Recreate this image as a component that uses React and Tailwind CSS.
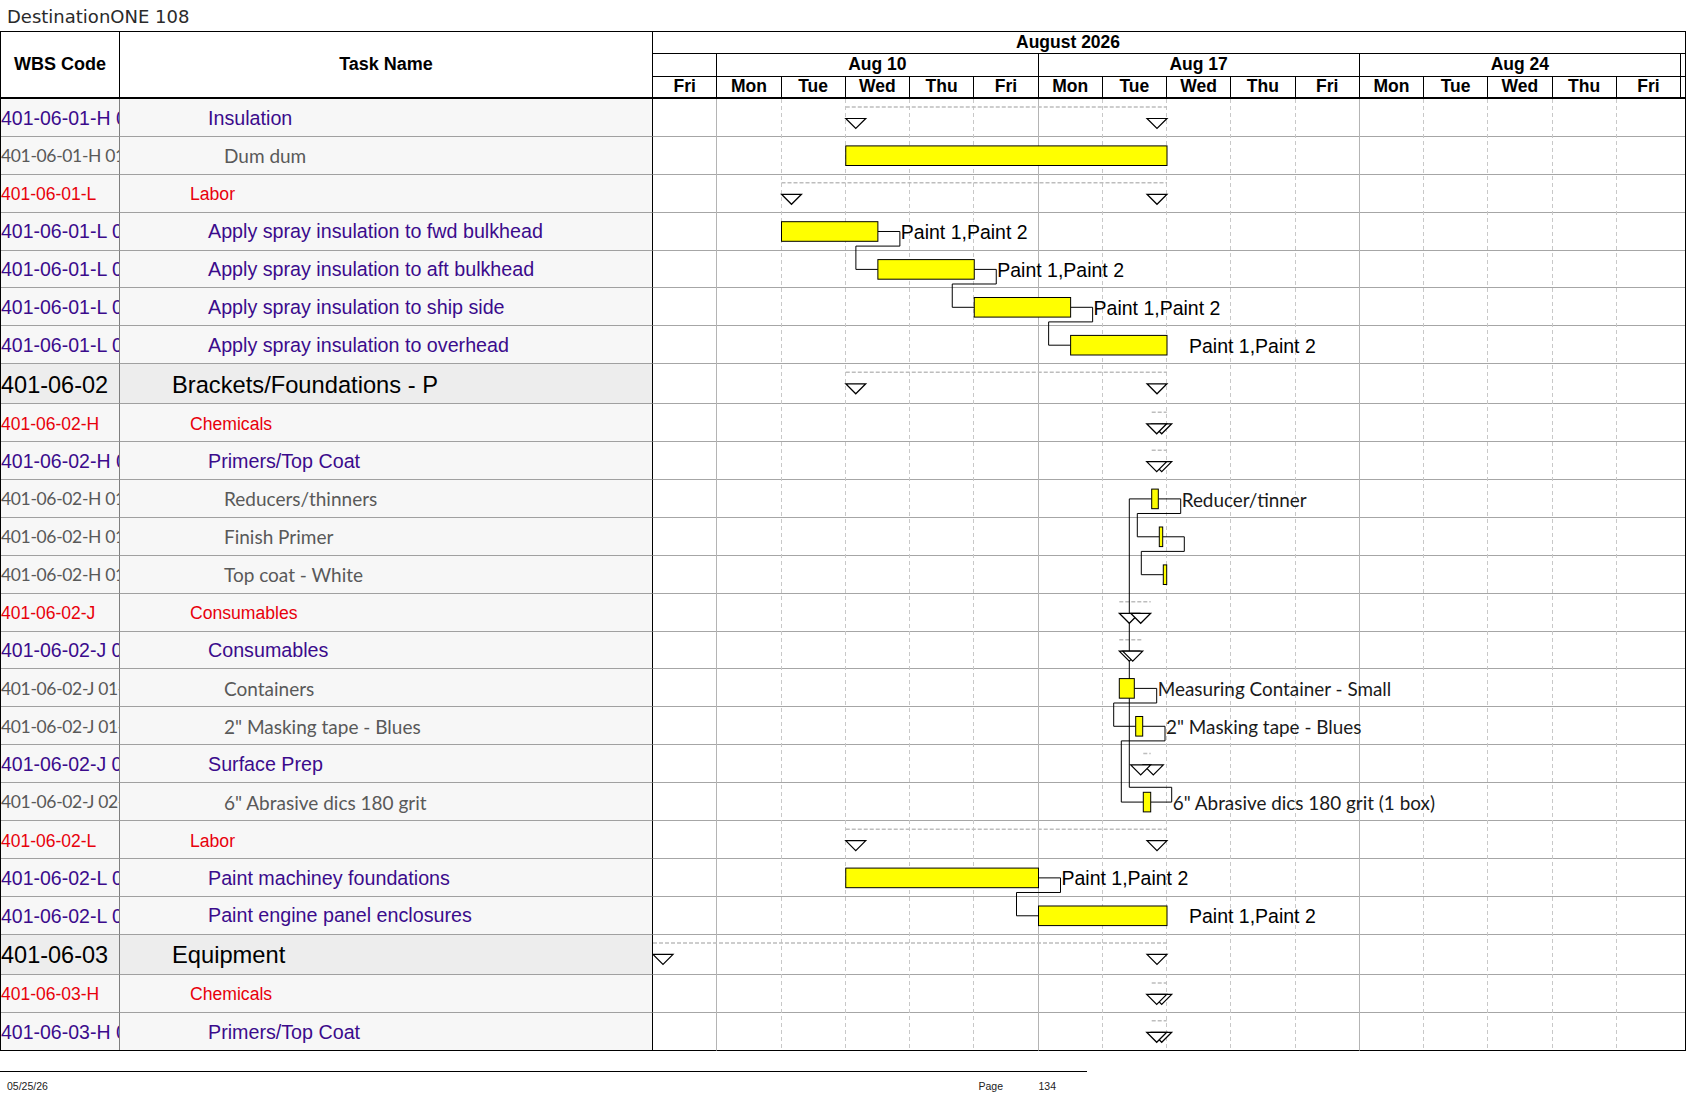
import React from "react";

// chart geometry (page pixels)
const DW = 64.25;
const X0 = 653;
const TOP = 99;
const cx = (d) => X0 + d * DW;

const DAYS = ["Fri", "Mon", "Tue", "Wed", "Thu", "Fri", "Mon", "Tue", "Wed", "Thu", "Fri", "Mon", "Tue", "Wed", "Thu", "Fri"];

// [type, wbs, task name]  p = purple, g = grey leaf, r = red, s = summary
const ROWS = [
  ["p", "401-06-01-H 01", "Insulation"],
  ["g", "401-06-01-H 01-01", "Dum dum"],
  ["r", "401-06-01-L", "Labor"],
  ["p", "401-06-01-L 01", "Apply spray insulation to fwd bulkhead"],
  ["p", "401-06-01-L 02", "Apply spray insulation to aft bulkhead"],
  ["p", "401-06-01-L 03", "Apply spray insulation to ship side"],
  ["p", "401-06-01-L 04", "Apply spray insulation to overhead"],
  ["s", "401-06-02", "Brackets/Foundations - P"],
  ["r", "401-06-02-H", "Chemicals"],
  ["p", "401-06-02-H 01", "Primers/Top Coat"],
  ["g", "401-06-02-H 01-01", "Reducers/thinners"],
  ["g", "401-06-02-H 01-02", "Finish Primer"],
  ["g", "401-06-02-H 01-03", "Top coat - White"],
  ["r", "401-06-02-J", "Consumables"],
  ["p", "401-06-02-J 01", "Consumables"],
  ["g", "401-06-02-J 01-01", "Containers"],
  ["g", "401-06-02-J 01-02", '2" Masking tape - Blues'],
  ["p", "401-06-02-J 02", "Surface Prep"],
  ["g", "401-06-02-J 02-01", '6" Abrasive dics 180 grit'],
  ["r", "401-06-02-L", "Labor"],
  ["p", "401-06-02-L 01", "Paint machiney foundations"],
  ["p", "401-06-02-L 02", "Paint engine panel enclosures"],
  ["s", "401-06-03", "Equipment"],
  ["r", "401-06-03-H", "Chemicals"],
  ["p", "401-06-03-H 01", "Primers/Top Coat"],
];

const STY = {
  p: {
    bg: "bg-[#f7f7f7]",
    pad: "pt-[2px]",
    wbs: "text-[19.5px] text-[#3b0b8c]",
    name: "pl-[88px] text-[19.7px] text-[#3b0b8c]",
  },
  g: {
    bg: "bg-[#f7f7f7]",
    pad: "pt-[1px]",
    wbs: "font-['Lato',sans-serif] text-[17.5px] tracking-[-0.35px] text-[#595959]",
    name: "pl-[104px] font-['Lato',sans-serif] text-[19px] text-[#595959]",
  },
  r: {
    bg: "bg-[#f7f7f7]",
    pad: "pt-[4px]",
    wbs: "text-[17.5px] text-[#e8000b]",
    name: "pl-[70px] text-[17.6px] text-[#e8000b]",
  },
  s: {
    bg: "bg-[#ededed]",
    pad: "pt-[4px]",
    wbs: "text-[23.5px] text-black",
    name: "pl-[52px] text-[23.7px] text-black",
  },
};

const rowH = (t) => (t === "s" ? 40 : 37.9);

const layout = () => {
  let y = TOP;
  return ROWS.map((r) => {
    const top = y;
    const h = rowH(r[0]);
    y += h;
    return { top, h, mid: top + 18.8 };
  });
};

// summary rows: [row, start, end]
const SUMMARY = [
  [0, cx(3), cx(8)],
  [2, cx(2), cx(8)],
  [7, cx(3), cx(8)],
  [8, 1151.7, 1166.7],
  [9, 1151.7, 1166.7],
  [13, 1119.3, 1150.7],
  [14, 1119.3, 1142.7],
  [17, 1143.3, 1150.7],
  [19, cx(3), cx(8)],
  [22, cx(0), cx(8)],
  [23, 1151.7, 1166.7],
  [24, 1151.7, 1166.7],
];

// task bars: [row, start, end]
const BARS = [
  [1, cx(3), cx(8)],
  [3, cx(2), cx(3.5)],
  [4, cx(3.5), cx(5)],
  [5, cx(5), cx(6.5)],
  [6, cx(6.5), cx(8)],
  [10, 1151.7, 1158.3],
  [11, 1159.3, 1162.7],
  [12, 1163.3, 1166.7],
  [15, 1119.3, 1134.3],
  [16, 1135.7, 1142.7],
  [18, 1143.3, 1150.7],
  [20, cx(3), cx(6)],
  [21, cx(6), cx(8)],
];

// bar labels: [row, text, x, lineFrom (null = no leader), calibri?]
const LABELS = [
  [3, "Paint 1,Paint 2", cx(3.5) + 22, cx(3.5), false],
  [4, "Paint 1,Paint 2", cx(5) + 22, cx(5), false],
  [5, "Paint 1,Paint 2", cx(6.5) + 22, cx(6.5), false],
  [6, "Paint 1,Paint 2", cx(8) + 21, null, false],
  [10, "Reducer/tinner", 1180.7, 1158.3, true],
  [11, "", 1184.3, 1162.7, true],
  [15, "Measuring Container - Small", 1156.7, 1134.3, true],
  [16, '2" Masking tape - Blues', 1165, 1142.7, true],
  [18, '6" Abrasive dics 180 grit (1 box)', 1171.7, 1150.7, true],
  [20, "Paint 1,Paint 2", cx(6) + 22, cx(6), false],
  [21, "Paint 1,Paint 2", cx(8) + 21, null, false],
];

// finish-to-start links: [fromRow, fromX, toRow, toX]
const LINKS = [
  [3, cx(3.5) + 22, 4, cx(3.5)],
  [4, cx(5) + 22, 5, cx(5)],
  [5, cx(6.5) + 22, 6, cx(6.5)],
  [10, 1180.7, 11, 1159.3],
  [11, 1184.3, 12, 1163.3],
  [15, 1156.7, 16, 1135.7],
  [16, 1165, 18, 1143.3],
  [20, cx(6) + 22, 21, cx(6)],
];

const tri = (x, y) => `${x},${y} ${x + 20},${y} ${x + 10},${y + 10}`;

const ChartOverlay = ({ L, h }) => (
  <svg className="absolute top-0 left-[652px]" width={1032} height={h} viewBox={`653 ${TOP} 1032 ${h}`}>
    {/* day grid */}
    {Array.from({ length: 15 }, (_, i) => i + 1).map((k) => (
      <line
        key={k}
        x1={Math.round(cx(k)) - 0.5}
        x2={Math.round(cx(k)) - 0.5}
        y1={TOP}
        y2={TOP + h}
        stroke={k % 5 === 1 ? "#b4b4b4" : "#c8c8c8"}
        strokeDasharray={k % 5 === 1 ? undefined : "4 3"}
        strokeWidth="1"
      />
    ))}

    {/* summary dashed spans */}
    {SUMMARY.map(([r, s, e]) => (
      <line key={"d" + r} x1={s} x2={e} y1={L[r].top + 8} y2={L[r].top + 8} stroke="#bdbdbd" strokeWidth="1.5" strokeDasharray="4 2" />
    ))}

    {/* links */}
    {LINKS.map(([a, fx, b, tx]) => (
      <path
        key={"l" + a}
        d={`M${fx},${L[a].mid} V${L[a].top + L[a].h - 4.5} H${tx - 22} V${L[b].mid} H${tx}`}
        fill="none"
        stroke="#000"
        strokeWidth="1"
      />
    ))}
    <path d={`M1171.7,${L[18].mid} V${L[18].top + 4} H1129.3 V${L[10].mid} H1151.7`} fill="none" stroke="#000" strokeWidth="1" />

    {/* label leaders */}
    {LABELS.filter((l) => l[3] !== null).map(([r, , x, from]) => (
      <line key={"ll" + r} x1={from} x2={x} y1={L[r].mid} y2={L[r].mid} stroke="#000" strokeWidth="1" />
    ))}

    {/* bars */}
    {BARS.map(([r, s, e]) => (
      <rect key={"b" + r} x={s} y={L[r].top + 9} width={e - s} height={19.6} fill="#ffff00" stroke="#000" strokeWidth="1" />
    ))}

    {/* summary milestones */}
    {SUMMARY.map(([r, s, e]) => (
      <g key={"t" + r} fill="#fff" stroke="#000" strokeWidth="1.2">
        <polygon points={tri(s, L[r].top + 19.5)} />
        <polygon points={tri(e - 20, L[r].top + 19.5)} />
      </g>
    ))}

    {/* labels */}
    {LABELS.filter((l) => l[1]).map(([r, text, x, , cal]) => (
      <text
        key={"x" + r}
        x={x + 1}
        y={L[r].mid + 0.5}
        dominantBaseline="central"
        fill={cal ? "#1a1a1a" : "#000"}
        className={cal ? "font-['Lato',sans-serif] text-[18.9px]" : "font-['Liberation_Sans',Arial,sans-serif] text-[19.5px]"}
      >
        {text}
      </text>
    ))}
  </svg>
);

const Header = () => (
  <div className="flex h-[67px] border-b-2 border-black">
    <div className="w-[119px] border-r border-black flex items-center justify-center font-bold text-[18px]">WBS Code</div>
    <div className="w-[532px] flex items-center justify-center font-bold text-[18px]">Task Name</div>
    <div className="flex-1 border-l border-black flex flex-col font-bold text-[17.5px] leading-none">
      <div className="h-[22px] border-b border-black flex items-center pl-[363px]">August 2026</div>
      <div className="h-[22.5px] border-b border-black grid grid-cols-[64.25px_321.25px_321.25px_321.25px_1fr]">
        <div className="border-r border-black" />
        {["Aug 10", "Aug 17", "Aug 24"].map((w) => (
          <div key={w} className="border-r border-black flex items-center justify-center">
            {w}
          </div>
        ))}
        <div />
      </div>
      <div className="flex-1 grid grid-cols-[repeat(16,64.25px)_1fr]">
        {DAYS.map((d, i) => (
          <div key={i} className="border-r border-black flex items-center justify-center">
            {d}
          </div>
        ))}
        <div />
      </div>
    </div>
  </div>
);

const Row = ({ r, last }) => {
  const [t, wbs, name] = r;
  const st = STY[t];
  const line = last ? "" : "border-b border-b-[#a0a0a0]";
  return (
    <div className={`flex ${t === "s" ? "h-[40px]" : "h-[37.9px]"}`}>
      <div className={`w-[119px] border-r border-r-[#7f7f7f] ${line} ${st.bg} overflow-hidden whitespace-nowrap flex items-center leading-none ${st.pad} ${st.wbs}`}>
        {wbs}
      </div>
      <div className={`w-[532px] ${line} ${st.bg} overflow-hidden whitespace-nowrap flex items-center leading-none ${st.pad} ${st.name}`}>
        {name}
      </div>
      <div className={`flex-1 border-l border-l-black bg-white ${last ? "" : "border-b border-b-[#a6a6a6]"}`} />
    </div>
  );
};

export default function App() {
  const L = layout();
  const end = L[L.length - 1];
  const bodyH = end.top + end.h - TOP;

  return (
    <div className="w-[1687px] h-[1097px] bg-white overflow-hidden font-['Liberation_Sans',Arial,sans-serif] text-black">
      <div className="h-[31px] pl-[7px] pt-[1px] flex items-center font-['DejaVu_Sans',sans-serif] text-[18px] text-[#2a2a2a]">
        DestinationONE 108
      </div>

      <div className="w-[1686px] border border-black">
        <Header />
        <div className="relative">
          {ROWS.map((r, i) => (
            <Row key={i} r={r} last={i === ROWS.length - 1} />
          ))}
          <ChartOverlay L={L} h={bodyH} />
        </div>
      </div>

      {/* page footer */}
      <div className="mt-[20px] w-[1087px] border-t border-black flex items-center pt-[9px] text-[10.5px] leading-none font-['Liberation_Sans_Narrow','Liberation_Sans',sans-serif] text-[#222]">
        <span className="pl-[7px]">05/25/26</span>
        <span className="ml-auto w-[60px]">Page</span>
        <span className="pr-[31px]">134</span>
      </div>
    </div>
  );
}
